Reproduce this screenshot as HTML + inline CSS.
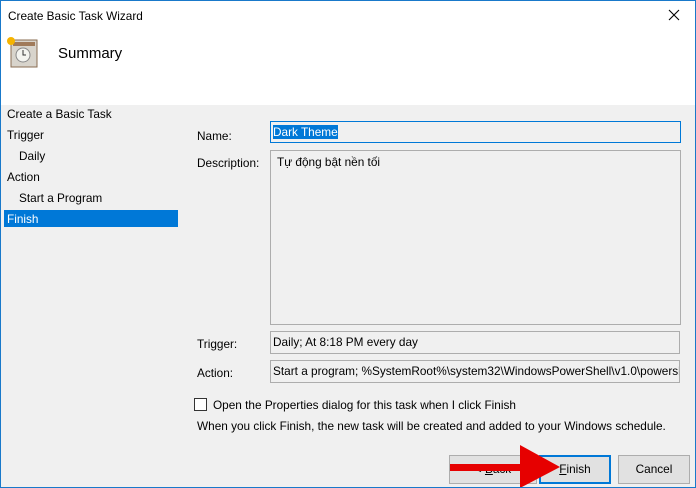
<!DOCTYPE html>
<html><head><style>
*{margin:0;padding:0;box-sizing:border-box}
body{width:696px;height:488px;overflow:hidden;font-family:"Liberation Sans","Noto Sans CJK SC",sans-serif;font-size:11.8px;color:#000;background:#f0f0f0;position:relative}
.top{position:absolute;left:0;top:0;width:696px;height:105px;background:#fff}
.frame{position:absolute;left:0;top:0;width:696px;height:488px;border:1px solid #1979ca;pointer-events:none}
.a{position:absolute;white-space:nowrap}
.box{position:absolute;background:#f0f0f0;border:1px solid #adadad;padding:3px 2px;white-space:nowrap;overflow:hidden}
.btn{position:absolute;height:29px;border:1px solid #adadad;background:#e1e1e1;text-align:center;line-height:27px}
</style></head><body>
<div class="top"></div>
<div class="a" style="left:8px;top:9px">Create Basic Task Wizard</div>
<svg class="a" style="left:667px;top:8px" width="14" height="14"><path d="M2 2L12 12M12 2L2 12" stroke="#000" stroke-width="1.1"/></svg>
<svg class="a" style="left:5px;top:35px" width="34" height="34">
<rect x="6" y="5" width="26" height="27" fill="#d8d4cc" stroke="#8a6d52"/>
<rect x="8" y="7" width="22" height="4" fill="#a07a5a"/>
<circle cx="18" cy="20" r="7" fill="#f4f4f0" stroke="#888"/>
<path d="M18 15v5h3" stroke="#333" fill="none"/>
<circle cx="6" cy="6" r="4" fill="#f6b400"/>
</svg>
<div class="a" style="left:58px;top:45px;font-size:15px">Summary</div>
<div class="a" style="left:7px;top:107px">Create a Basic Task</div>
<div class="a" style="left:7px;top:128px">Trigger</div>
<div class="a" style="left:19px;top:149px">Daily</div>
<div class="a" style="left:7px;top:170px">Action</div>
<div class="a" style="left:19px;top:191px">Start a Program</div>
<div class="a" style="left:4px;top:210px;width:174px;height:17px;background:#0078d7;color:#fff;padding:2px 3px">Finish</div>
<div class="a" style="left:197px;top:129px">Name:</div>
<div class="a" style="left:197px;top:156px">Description:</div>
<div class="a" style="left:197px;top:337px">Trigger:</div>
<div class="a" style="left:197px;top:366px">Action:</div>
<div class="box" style="left:270px;top:121px;width:411px;height:22px;border-color:#0078d7;padding:3px 2px"><span style="background:#0078d7;color:#fff">Dark Theme</span></div>
<div class="box" style="left:270px;top:150px;width:411px;height:175px;padding:4px 6px">Tự động bật nền tối</div>
<div class="box" style="left:270px;top:331px;width:410px;height:23px">Daily; At 8:18 PM every day</div>
<div class="box" style="left:270px;top:360px;width:410px;height:23px">Start a program; %SystemRoot%\system32\WindowsPowerShell\v1.0\powershell.exe</div>
<div class="a" style="left:194px;top:398px;width:13px;height:13px;border:1px solid #333;background:#fff"></div>
<div class="a" style="left:213px;top:398px">Open the Properties dialog for this task when I click Finish</div>
<div class="a" style="left:197px;top:419px">When you click Finish, the new task will be created and added to your Windows schedule.</div>
<div class="btn" style="left:449px;top:455px;width:88px">&lt; <u>B</u>ack</div>
<div class="btn" style="left:539px;top:455px;width:72px;border:2px solid #0078d7;line-height:25px"><u>F</u>inish</div>
<div class="btn" style="left:618px;top:455px;width:72px">Cancel</div>
<svg class="a" style="left:440px;top:445px" width="130" height="43"><path d="M10 19H85V26H10Z" fill="#e60000"/><path d="M80 0L120 22L80 43Z" fill="#e60000"/></svg>
<div class="frame"></div>
</body></html>
